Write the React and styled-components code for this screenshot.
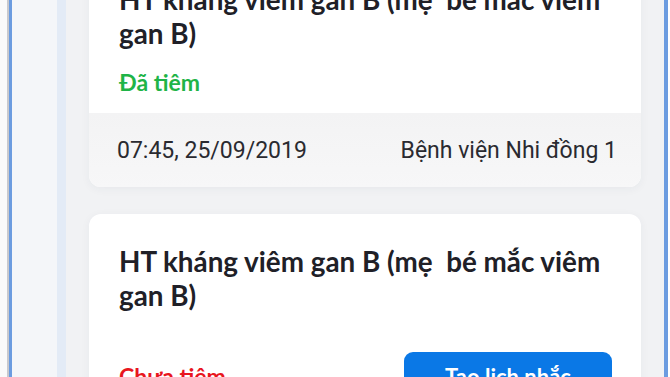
import React from "react";
import styled, { createGlobalStyle } from "styled-components";

const Global = createGlobalStyle`
  html, body { margin: 0; padding: 0; width: 670px; height: 377px; overflow: hidden; background: #f2f3f5; }
  #root { width: 670px; height: 377px; }
  * { box-sizing: border-box; }
`;

const Frame = styled.div`
  display: flex;
  width: 670px;
  height: 377px;
  overflow: hidden;
  background: #f2f3f5;
`;

const Stripe = styled.div`
  flex: 0 0 ${(p) => p.w}px;
  background: ${(p) => p.c};
`;

const Screen = styled.div`
  flex: 1;
  display: flex;
  flex-direction: column;
  gap: 27px;
  padding: 0 0 0 23px;
  margin-top: -48px;
  background: #f1f2f4;
`;

const Card = styled.div`
  width: 552px;
  flex-shrink: 0;
  background: #ffffff;
  border-radius: 12px;
  overflow: hidden;
  box-shadow: 0 2px 10px rgba(40, 50, 70, 0.05);
  display: flex;
  flex-direction: column;
`;

const Body = styled.div`
  padding: 31px 29px ${(p) => p.pb}px 30px;
  display: flex;
  flex-direction: column;
`;

const Title = styled.div`
  font-family: "Lato", "Noto Sans", sans-serif;
  font-weight: 700;
  font-size: 27.8px;
  line-height: 34px;
  color: #202027;
`;

const Status = styled.div`
  font-family: "Lato", "Noto Sans", sans-serif;
  font-weight: 700;
  font-size: 23px;
  line-height: 30px;
  color: ${(p) => p.color};
  margin-top: ${(p) => p.mt || 0}px;
`;

const ActionRow = styled.div`
  display: flex;
  align-items: center;
  justify-content: space-between;
  margin-top: 39px;
`;

const Button = styled.button`
  width: 208px;
  height: 48px;
  border: none;
  border-radius: 9px;
  background: #0a78e6;
  color: #fff;
  font-family: "Lato", "Noto Sans", sans-serif;
  font-weight: 700;
  font-size: 22px;
`;

const Footer = styled.div`
  height: 74px;
  background: linear-gradient(180deg, #f3f3f4 0%, #f7f7f8 100%);
  display: flex;
  align-items: center;
  justify-content: space-between;
  padding: 0 24px 0 28px;
  font-family: "Roboto", "Liberation Sans", sans-serif;
  font-size: 23px;
  color: #2a2a30;
`;

export default function App() {
  return (
    <>
      <Global />
      <Frame>
        <Stripe w={7} c="#fafafa" />
        <Stripe w={2} c="#c9c9cd" />
        <Stripe w={3} c="#6c9ce0" />
        <Stripe w={45} c="#f4f6f9" />
        <Stripe w={9} c="#e3ebf6" />
        <Screen>
          <Card>
            <Body pb={16}>
              <Title>HT kháng viêm gan B (mẹ&nbsp; bé mắc viêm gan B)</Title>
              <Status color="#1fb447" mt={16}>Đã tiêm</Status>
            </Body>
            <Footer>
              <span>07:45, 25/09/2019</span>
              <span>Bệnh viện Nhi đồng 1</span>
            </Footer>
          </Card>
          <Card>
            <Body pb={24}>
              <Title>HT kháng viêm gan B (mẹ&nbsp; bé mắc viêm gan B)</Title>
              <ActionRow>
                <Status color="#e8161e">Chưa tiêm</Status>
                <Button>Tạo lịch nhắc</Button>
              </ActionRow>
            </Body>
          </Card>
        </Screen>
        <Stripe w={4} c="#6c9ce0" />
        <Stripe w={2} c="#ffffff" />
      </Frame>
    </>
  );
}
